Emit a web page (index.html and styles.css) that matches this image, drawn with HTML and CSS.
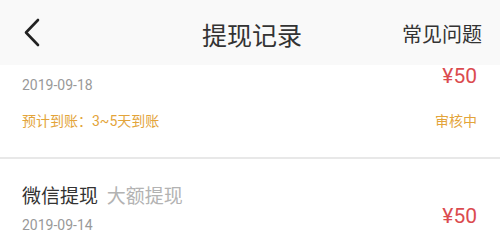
FILE: index.html
```html
<!DOCTYPE html>
<html lang="zh-CN">
<head>
    <meta charset="UTF-8">
    <meta name="viewport" content="width=device-width, initial-scale=1.0">
    <title>提现记录</title>
    <link rel="stylesheet" href="styles.css">
</head>
<body>
    <header class="nav-bar">
        <a class="back-btn" href="#">
            <svg width="20" height="30" viewBox="0 0 20 30">
                <polyline points="16,2 4,14.5 16,27" fill="none" stroke="#222" stroke-width="2.6" stroke-linecap="round" stroke-linejoin="round"/>
            </svg>
        </a>
        <h1 class="nav-title">提现记录</h1>
        <a class="nav-link" href="#">常见问题</a>
    </header>

    <div class="record-list">
        <div class="record-item">
            <div class="record-main">
                <div class="record-info">
                    <div class="record-title">微信提现 <span class="record-sub">大额提现</span></div>
                    <div class="record-date">2019-09-18</div>
                </div>
                <div class="record-amount">¥50</div>
            </div>
            <div class="record-status">
                <span>预计到账：3~5天到账</span>
                <span>审核中</span>
            </div>
        </div>

        <div class="record-item">
            <div class="record-main">
                <div class="record-info">
                    <div class="record-title">微信提现 <span class="record-sub">大额提现</span></div>
                    <div class="record-date">2019-09-14</div>
                </div>
                <div class="record-amount">¥50</div>
            </div>
        </div>
    </div>
</body>
</html>
```

FILE: styles.css
```css
body {
    font-family: Roboto, "Noto Sans CJK SC", sans-serif;
    background-color: #fff;
    margin: 0;
    padding: 0;
    overflow: hidden;
}
a {
    text-decoration: none;
    color: inherit;
}
/* header sits over the scrolled list */
.nav-bar {
    position: fixed;
    top: 0;
    left: 0;
    right: 0;
    z-index: 10;
    height: 65px;
    display: grid;
    grid-template-columns: 1fr auto 1fr;
    align-items: center;
    padding: 0 18px 0 22px;
    background-color: #f9f9f9;
}
.back-btn {
    display: flex;
    align-items: center;
    padding-top: 1px;
}
.nav-title {
    margin: 0;
    font-size: 25px;
    font-weight: normal;
    color: #333;
    padding-top: 3px;
}
.nav-link {
    justify-self: end;
    font-size: 20px;
    color: #333;
    padding-top: 2px;
}
.record-list {
    padding-top: 19px;
}
.record-item {
    padding: 26px 23px 26px 22px;
    border-bottom: 2px solid #e8e8e8;
}
.record-main {
    display: flex;
    justify-content: space-between;
    align-items: flex-start;
}
.record-title {
    font-size: 19px;
    line-height: 24px;
    color: #333;
}
.record-sub {
    color: #b3b3b3;
    margin-left: 4px;
}
.record-date {
    margin-top: 6px;
    font-size: 14px;
    line-height: 20px;
    color: #999;
}
.record-amount {
    margin-top: 19px;
    font-size: 21px;
    line-height: 24px;
    color: #db4b4f;
}
.record-status {
    display: flex;
    justify-content: space-between;
    margin-top: 16px;
    font-size: 14px;
    line-height: 20px;
    color: #e3a43a;
}
```
